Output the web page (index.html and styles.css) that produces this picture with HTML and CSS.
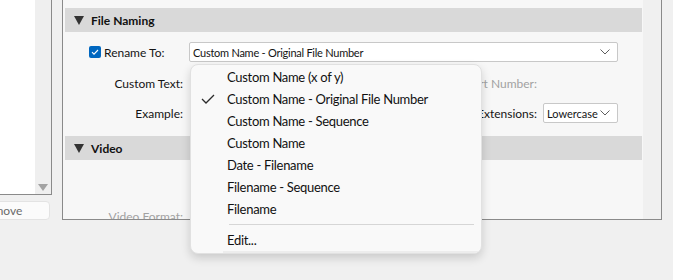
FILE: index.html
```html
<!DOCTYPE html>
<html lang="en">
    <head>
        <title>Rename Files</title>
        <link rel="stylesheet" href="styles.css">
    </head>
    <body>
        <div class="screen">
            <div class="side">
                <div class="list">
                    <div class="list-body"></div>
                    <div class="list-scroll">
                        <svg width="10" height="7" viewBox="0 0 10 7"><polygon points="0,0 10,0 5,7" fill="#a3a3a3"/></svg>
                    </div>
                </div>
                <div class="side-actions">
                    <button class="btn">Remove</button>
                </div>
            </div>

            <div class="panel">
                <div class="panel-body">
                    <section class="group">
                        <div class="group-head">
                            <svg width="10" height="9" viewBox="0 0 10 9"><polygon points="0,0 10,0 5,9" fill="#333"/></svg>
                            <span>File Naming</span>
                        </div>
                        <div class="form">
                            <div class="row">
                                <label class="check-label">
                                    <span class="checkbox">
                                        <svg width="12" height="12" viewBox="0 0 12 12"><polyline points="3,6.2 5,8.2 9,4" fill="none" stroke="#fff" stroke-width="1.1"/></svg>
                                    </span>
                                    Rename To:
                                </label>
                                <div class="select wide">
                                    <span>Custom Name - Original File Number</span>
                                    <svg width="10" height="6" viewBox="0 0 10 6"><polyline points="0.5,0.5 5,5 9.5,0.5" fill="none" stroke="#5f5f5f"/></svg>
                                </div>
                            </div>
                            <div class="row">
                                <span class="label">Custom Text:</span>
                                <div class="control">
                                    <span class="label muted">Start Number:</span>
                                    <span class="blank"></span>
                                </div>
                            </div>
                            <div class="row">
                                <span class="label">Example:</span>
                                <div class="control">
                                    <span class="label">Extensions:</span>
                                    <div class="select small">
                                        <span>Lowercase</span>
                                        <svg width="10" height="6" viewBox="0 0 10 6"><polyline points="0.5,0.5 5,5 9.5,0.5" fill="none" stroke="#5f5f5f"/></svg>
                                    </div>
                                </div>
                            </div>
                        </div>
                    </section>

                    <section class="group video">
                        <div class="group-head">
                            <svg width="10" height="9" viewBox="0 0 10 9"><polygon points="0,0 10,0 5,9" fill="#333"/></svg>
                            <span>Video</span>
                        </div>
                        <div class="form">
                            <div class="row format">
                                <span class="label muted">Video Format:</span>
                                <div class="control"></div>
                            </div>
                        </div>
                    </section>
                </div>
                <div class="panel-scroll"></div>
            </div>

            <!-- open dropdown of the Rename To select -->
            <div class="menu">
                <div class="menu-item">Custom Name (x of y)</div>
                <div class="menu-item checked">
                    <svg class="tick" width="14" height="10" viewBox="0 0 14 10"><polyline points="1,5 5,9 13,1" fill="none" stroke="#2b2b2b" stroke-width="1.3"/></svg>
                    Custom Name - Original File Number
                </div>
                <div class="menu-item">Custom Name - Sequence</div>
                <div class="menu-item">Custom Name</div>
                <div class="menu-item">Date - Filename</div>
                <div class="menu-item">Filename - Sequence</div>
                <div class="menu-item">Filename</div>
                <div class="menu-sep"></div>
                <div class="menu-item">Edit...</div>
                <div class="menu-peek"></div>
            </div>
        </div>
    </body>
</html>
```

FILE: styles.css
```css
body
{
    margin: 0;
    background-color: #f0f0f0;
    font-family: 'Lato', sans-serif;
    font-size: 12px;
    color: #141414;
    overflow: hidden;
}

.screen
{
    position: relative;
    display: flex;
    gap: 10px;
    height: 280px;
}

/* left file list */

.side
{
    width: 52px;
    display: flex;
    flex-direction: column;
}

.list
{
    display: flex;
    height: 194px;
    border-right: 1px solid #8a8a8a;
    border-bottom: 1px solid #8a8a8a;
}

.list-body
{
    width: 35px;
    background-color: #fff;
}

.list-scroll
{
    flex: 1;
    background-color: #efefef;
    display: flex;
    align-items: flex-end;
    justify-content: center;
    padding-bottom: 3px;
}

.side-actions
{
    margin-top: 6px;
    width: 50px;
    overflow: hidden;
}

.btn
{
    margin-left: -27px;
    width: 77px;
    height: 19px;
    padding: 0 0 0 6px;
    text-align: left;
    font-family: inherit;
    font-size: 12px;
    color: #6a6a6a;
    background-color: #fbfbfb;
    border: 1px solid #e3e3e3;
    border-radius: 4px;
}

/* main settings panel */

.panel
{
    display: flex;
    width: 598px;
    height: 219px;
    border: 1px solid #8a8a8a;
    border-top: none;
    background-color: #f7f7f7;
    overflow: hidden;
}

.panel-body
{
    width: 577px;
    padding: 8px 1px 0 2px;
}

.panel-scroll
{
    flex: 1;
    background-color: #f0f0f0;
}

.group-head
{
    display: flex;
    align-items: center;
    gap: 7px;
    height: 24px;
    padding-left: 9px;
    background-color: #d9d9d9;
    font-weight: 700;
    color: #111;
}

.form
{
    padding-top: 10px;
}

.row
{
    display: grid;
    grid-template-columns: 118px 429px;
    column-gap: 6px;
    align-items: center;
    height: 20px;
    margin-bottom: 11px;
}

.row + .row
{
    margin-bottom: 10px;
}

.label
{
    text-align: right;
    white-space: nowrap;
}

.muted
{
    color: #a2a2a2;
}

.check-label
{
    display: flex;
    align-items: center;
    gap: 3px;
    padding-left: 24px;
}

.checkbox
{
    display: flex;
    width: 12px;
    height: 12px;
    border-radius: 2px;
    background-color: #0067c0;
}

.control
{
    display: flex;
    justify-content: flex-end;
    align-items: center;
    gap: 6px;
}

.blank
{
    width: 75px;
}

.select
{
    display: flex;
    align-items: center;
    justify-content: space-between;
    box-sizing: border-box;
    height: 20px;
    padding: 0 7px 0 3px;
    background-color: #fff;
    border: 1px solid #c8c8c8;
    border-radius: 2px;
    font-size: 11px;
    letter-spacing: -0.25px;
}

.select.small
{
    width: 75px;
    letter-spacing: 0;
}

.group.video
{
    margin-top: 13px;
}

.row.format
{
    margin-top: 36px;
}

/* dropdown menu */

.menu
{
    position: absolute;
    left: 190px;
    top: 64px;
    width: 290px;
    height: 187px;
    padding-top: 1px;
    background-color: #f9f9f9;
    border: 1px solid #e1e1e1;
    border-radius: 8px;
    box-shadow: 0 4px 10px rgba(0, 0, 0, 0.16);
    font-size: 13px;
    letter-spacing: -0.3px;
    color: #111;
    overflow: hidden;
}

.menu-item
{
    position: relative;
    height: 22px;
    line-height: 22px;
    padding-left: 36px;
    white-space: nowrap;
}

.tick
{
    position: absolute;
    left: 10px;
    top: 6px;
}

.menu-sep
{
    height: 1px;
    margin: 4px 7px 4px 38px;
    background-color: #d6d6d6;
}

.menu-peek
{
    height: 3px;
    margin: 0 1px 0 32px;
    background-color: #ededed;
}
```
